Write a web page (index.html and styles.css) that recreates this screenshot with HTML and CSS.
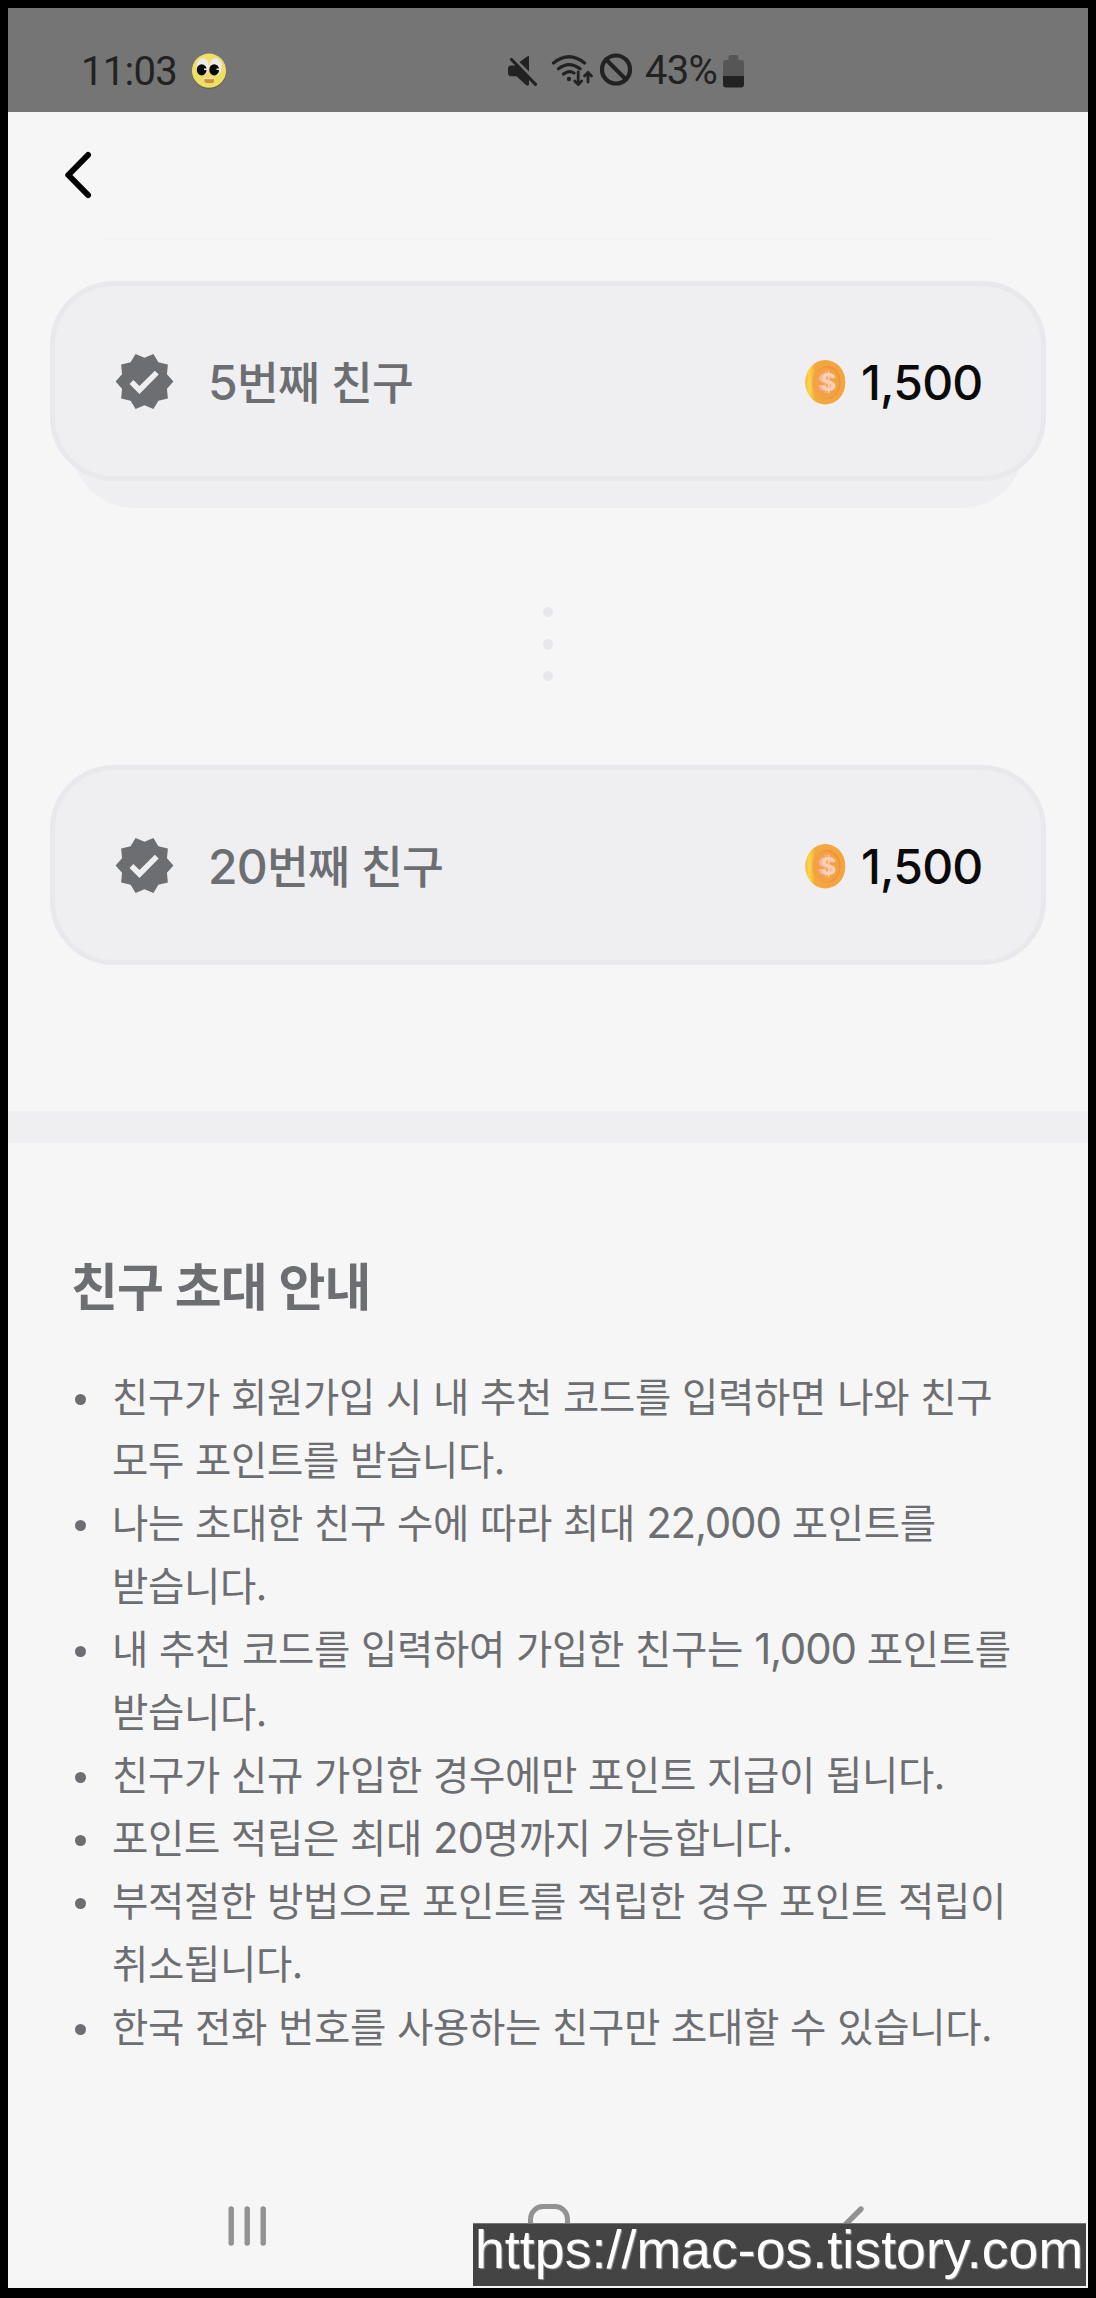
FILE: index.html
```html
<!DOCTYPE html>
<html lang="ko">
<head>
<meta charset="utf-8">
<title>친구 초대</title>
<link rel="stylesheet" href="styles.css">
</head>
<body>
<svg width="0" height="0" class="defs" aria-hidden="true">
  <defs>
    <linearGradient id="coin-edge" x1="0" x2="1"><stop offset="0" stop-color="#f5b835"/><stop offset=".1" stop-color="#fbd650"/><stop offset=".25" stop-color="#f5a93a"/><stop offset="1" stop-color="#f2a23c"/></linearGradient>
    <symbol id="verified" viewBox="0 0 24 24"><path d="M23 12l-2.44-2.79.34-3.69-3.61-.82L15.4 1.5 12 2.96 8.6 1.5 6.71 4.69 3.1 5.5l.34 3.7L1 12l2.44 2.79-.34 3.7 3.61.82L8.6 22.5l3.4-1.47 3.4 1.46 1.89-3.19 3.61-.82-.34-3.69L23 12zm-12.91 4.72l-3.8-3.81 1.48-1.48 2.32 2.33 5.85-5.87 1.48 1.48-7.33 7.35z"/></symbol>
    <symbol id="coin" viewBox="0 0 41 45">
      <ellipse cx="20.200" cy="22.3" rx="20" ry="22.2" fill="url(#coin-edge)"/>
      <ellipse cx="23.700" cy="22.3" rx="16.500" ry="20.8" fill="#f4a541"/>
      <ellipse cx="22.5" cy="22.3" rx="13.2" ry="16.2" fill="#ed9436"/>
      <ellipse cx="21.5" cy="22.8" rx="12.6" ry="15.2" fill="#f3a145"/>
      <text x="20.500" y="31" class="coin-sign coin-sign-side">$</text>
      <text x="23.5" y="31" class="coin-sign">$</text>
    </symbol>
  </defs>
</svg>

<header class="status">
  <span class="clock">11:03</span>
  <svg class="smiley" width="36" height="36" viewBox="0 0 36 36">
    <circle cx="18" cy="18.6" r="17.2" fill="#5f5c45"/>
    <circle cx="18" cy="17.7" r="17.1" fill="#eedd66"/>
    <ellipse cx="11.8" cy="13.600" rx="6.300" ry="8.600" fill="#ecebe8"/><ellipse cx="24.6" cy="13.600" rx="6.300" ry="8.600" fill="#ecebe8"/>
    <ellipse cx="10.7" cy="16.8" rx="4.9" ry="5.6" fill="#0b0b0b"/><ellipse cx="23.2" cy="16.8" rx="4.9" ry="5.6" fill="#0b0b0b"/>
    <path d="M13 15.400h3v1.600h-3zM25.500 15.400h3v1.600h-3z" fill="#ecebe8"/>
    <path d="M13.500 25.500h9.500v3q-1 1.500-2 1.500h-5.500q-2-.5-2-2z" fill="#c98f3e"/><path d="M13 24.500h10.500v1.700H13z" fill="#f5dfae"/>
  </svg>
  <svg class="system" width="130" height="40" viewBox="505 50 130 40" fill="none" stroke="#222" stroke-width="3.200" stroke-linecap="round">
    <path d="M529 56.500v15l-9.500-9.500 7-5q2.500-1.500 2.500-.5zM511 65.500h7.500L529 76.500v7.500q0 3-3 1l-9.500-8.700H511q-3-.3-3-3v-5q0-2.500 3-2.800z" stroke="none" fill="#222"/>
    <path d="M511.500 59.500l24 24.800"/>
    <path d="M553.500 63q15.500-12.500 31 0M558.500 68.800q10.500-8.500 21.500 0M563.500 74q5.500-4 10.500-1"/>
    <circle cx="569" cy="79" r="2.200" fill="#222" stroke="none"/>
    <path d="M578.200 72v12.500m-3.500-3.500l3.500 3.500 3.500-3.500M588 82V73m-3.500 3l3.500-3.500 3.500 3.500" stroke-width="2.800"/>
    <circle cx="616" cy="69.500" r="14" stroke-width="4.200"/><path d="M606 59.500l20 20" stroke-width="4"/>
  </svg>
  <span class="battery-text">43%</span>
  <svg width="21" height="40" viewBox="723 50 21 40">
    <path d="M728.500 60v-3q0-2 2-2h6q2 0 2 2v3h2.500q3 0 3 3v13.500h-21V63q0-3 3-3z" fill="#565656"/>
    <path d="M723 76h21v8.500q0 3-3 3h-15q-3 0-3-3z" fill="#222"/>
  </svg>
</header>

<nav class="topbar">
  <svg width="32" height="52" viewBox="62 149 32 52" fill="none" stroke="#000" stroke-width="6" stroke-linecap="round" stroke-linejoin="round"><path d="M88 155L68.300 175 88 195"/></svg>
</nav>

<main>
  <section class="rewards">
    <div class="stack">
      <div class="card">
        <svg class="badge"><use href="#verified"/></svg>
        <span class="label"><b>5</b>번째 친구</span>
        <svg class="coin"><use href="#coin"/></svg>
        <span class="price">1,500</span>
      </div>
    </div>
    <div class="dots"><i></i><i></i><i></i></div>
    <div class="card">
      <svg class="badge"><use href="#verified"/></svg>
      <span class="label"><b>20</b>번째 친구</span>
      <svg class="coin"><use href="#coin"/></svg>
      <span class="price">1,500</span>
    </div>
  </section>

  <section class="guide">
    <h1>친구 초대 안내</h1>
    <ul>
      <li>친구가 회원가입 시 내 추천 코드를 입력하면 나와 친구<br>모두 포인트를 받습니다.</li>
      <li>나는 초대한 친구 수에 따라 최대 <b>22,000</b> 포인트를<br>받습니다.</li>
      <li>내 추천 코드를 입력하여 가입한 친구는 <b>1,000</b> 포인트를<br>받습니다.</li>
      <li>친구가 신규 가입한 경우에만 포인트 지급이 됩니다.</li>
      <li>포인트 적립은 최대 <b>20</b>명까지 가능합니다.</li>
      <li>부적절한 방법으로 포인트를 적립한 경우 포인트 적립이<br>취소됩니다.</li>
      <li>한국 전화 번호를 사용하는 친구만 초대할 수 있습니다.</li>
    </ul>
  </section>
</main>

<footer class="navbar">
  <svg width="42" height="44" viewBox="226 2204 42 44" stroke="#929292" stroke-width="5.400" stroke-linecap="round"><path d="M231.200 2209v34M247.200 2209v34M263.200 2209v34"/></svg>
  <svg class="home" width="42" height="42" viewBox="0 0 42 42" fill="none" stroke="#929292" stroke-width="5"><rect x="2.500" y="2.500" width="37" height="37" rx="12.500"/></svg>
  <svg width="28" height="44" viewBox="0 0 28 44" fill="none" stroke="#929292" stroke-width="5.400" stroke-linecap="round" stroke-linejoin="round"><path d="M22 5L5 22l17 17"/></svg>
</footer>
<div class="watermark">https://mac-os.tistory.com</div>
</body>
</html>
```
FILE: styles.css
```css
* { box-sizing: border-box; }
body {
  position: relative;
  display: flex;
  flex-direction: column;
  margin: 0;
  width: 1096px;
  height: 2298px;
  overflow: hidden;
  border: solid #000;
  border-width: 8px 8px 10px;
  background: #f6f6f6;
  color: #6d6e72;
  font-family: "Noto Sans CJK KR", sans-serif;
}
svg { display: block; flex: none; }
.defs { position: absolute; }

.status {
  display: flex;
  align-items: center;
  flex: none;
  height: 104px;
  padding: 20px 0 0 73px;
  background: #757575;
  color: #222;
}
.clock {
  width: 110px;
  padding-top: 3px;
  font: 40px/48px Roboto, sans-serif;
  letter-spacing: -.7px;
}
.smiley { margin-top: 2px; }
.system { margin-left: 278px; }
.battery-text {
  width: 78px;
  padding: 2px 0 0 10px;
  margin-right: 10px;
  font: 40px/48px Roboto, sans-serif;
  letter-spacing: -.7px;
  white-space: nowrap;
}

.topbar {
  display: flex;
  flex: none;
  align-items: center;
  height: 126px;
  padding-left: 54px;
}
.topbar + main::before {
  content: "";
  display: block;
  height: 2px;
  margin: 0 97px;
  background: #f3f3f3;
}

.rewards {
  display: flex;
  flex-direction: column;
  padding: 41px 42px 146px;
}
.stack {
  position: relative;
  padding-bottom: 27px;
}
.stack::before {
  content: "";
  position: absolute;
  inset: 80px 22px 0;
  border-radius: 62px;
  background: #efeff1;
}
.card {
  position: relative;
  display: flex;
  align-items: center;
  height: 200px;
  padding: 0 57px 0 58px;
  border: 5px solid #e8e8ed;
  border-radius: 64px;
  background: #efeff2;
}
.badge { width: 63px; height: 63px; fill: #6d6e72; }
.label {
  flex: 1;
  margin-left: 32px;
  font-size: 45.500px;
  font-weight: 500;
  line-height: 60px;
  letter-spacing: -.8px;
}
.label b, li b {
  font-family: Inter, sans-serif;
  font-weight: 450;
  font-size: 48px;
}
.coin { width: 41px; height: 45px; margin-top: 2px; }
.coin-sign {
  fill: #fbcfb8;
  font: 700 24px Inter, sans-serif;
  text-anchor: middle;
}
.coin-sign-side { fill: #f6b795; }
.price {
  width: 123px;
  margin-left: 15px;
  padding-top: 4px;
  color: #0a0a0a;
  font: 450 48px/60px Inter, sans-serif;
  letter-spacing: -.8px;
}
.dots {
  display: flex;
  flex-direction: column;
  align-items: center;
  gap: 21.500px;
  height: 257px;
  padding-top: 99px;
}
.dots i {
  width: 10px;
  height: 10px;
  border-radius: 50%;
  background: #e8e8ec;
}
.dots i:nth-child(2) { height: 11px; }

.guide {
  padding: 105px 63px 0;
  border-top: 32px solid #efeff1;
}
h1 {
  margin: 0;
  font-size: 51px;
  font-weight: 700;
  line-height: 72px;
  letter-spacing: -.8px;
  word-spacing: -2px;
}
ul {
  margin: 43px 0 0;
  padding: 0;
  list-style: none;
}
li {
  position: relative;
  padding-left: 41px;
  font-size: 39.500px;
  line-height: 63px;
  letter-spacing: -.34px;
  word-spacing: .300px;
  white-space: nowrap;
}
li::before {
  content: "";
  position: absolute;
  left: 4px;
  top: 31px;
  width: 11px;
  height: 11px;
  border-radius: 50%;
  background: #6d6e72;
}
li b {
  font-size: 42px;
  font-weight: 400;
  line-height: 1;
  letter-spacing: -1.200px;
}

.navbar {
  display: flex;
  justify-content: space-between;
  margin-top: auto;
  padding: 0 221px 40px 218px;
}
.home { margin-right: 10px; }
.watermark {
  position: absolute;
  right: 2px;
  bottom: 2px;
  width: 613px;
  height: 63px;
  padding-left: 2px;
  border-top: 1px solid #777;
  background: #444;
  color: #fff;
  font: 53.500px/52px "Liberation Sans", Arial, sans-serif;
  letter-spacing: .1px;
  text-shadow: 1px 1px 1px #999;
  white-space: nowrap;
}
```
